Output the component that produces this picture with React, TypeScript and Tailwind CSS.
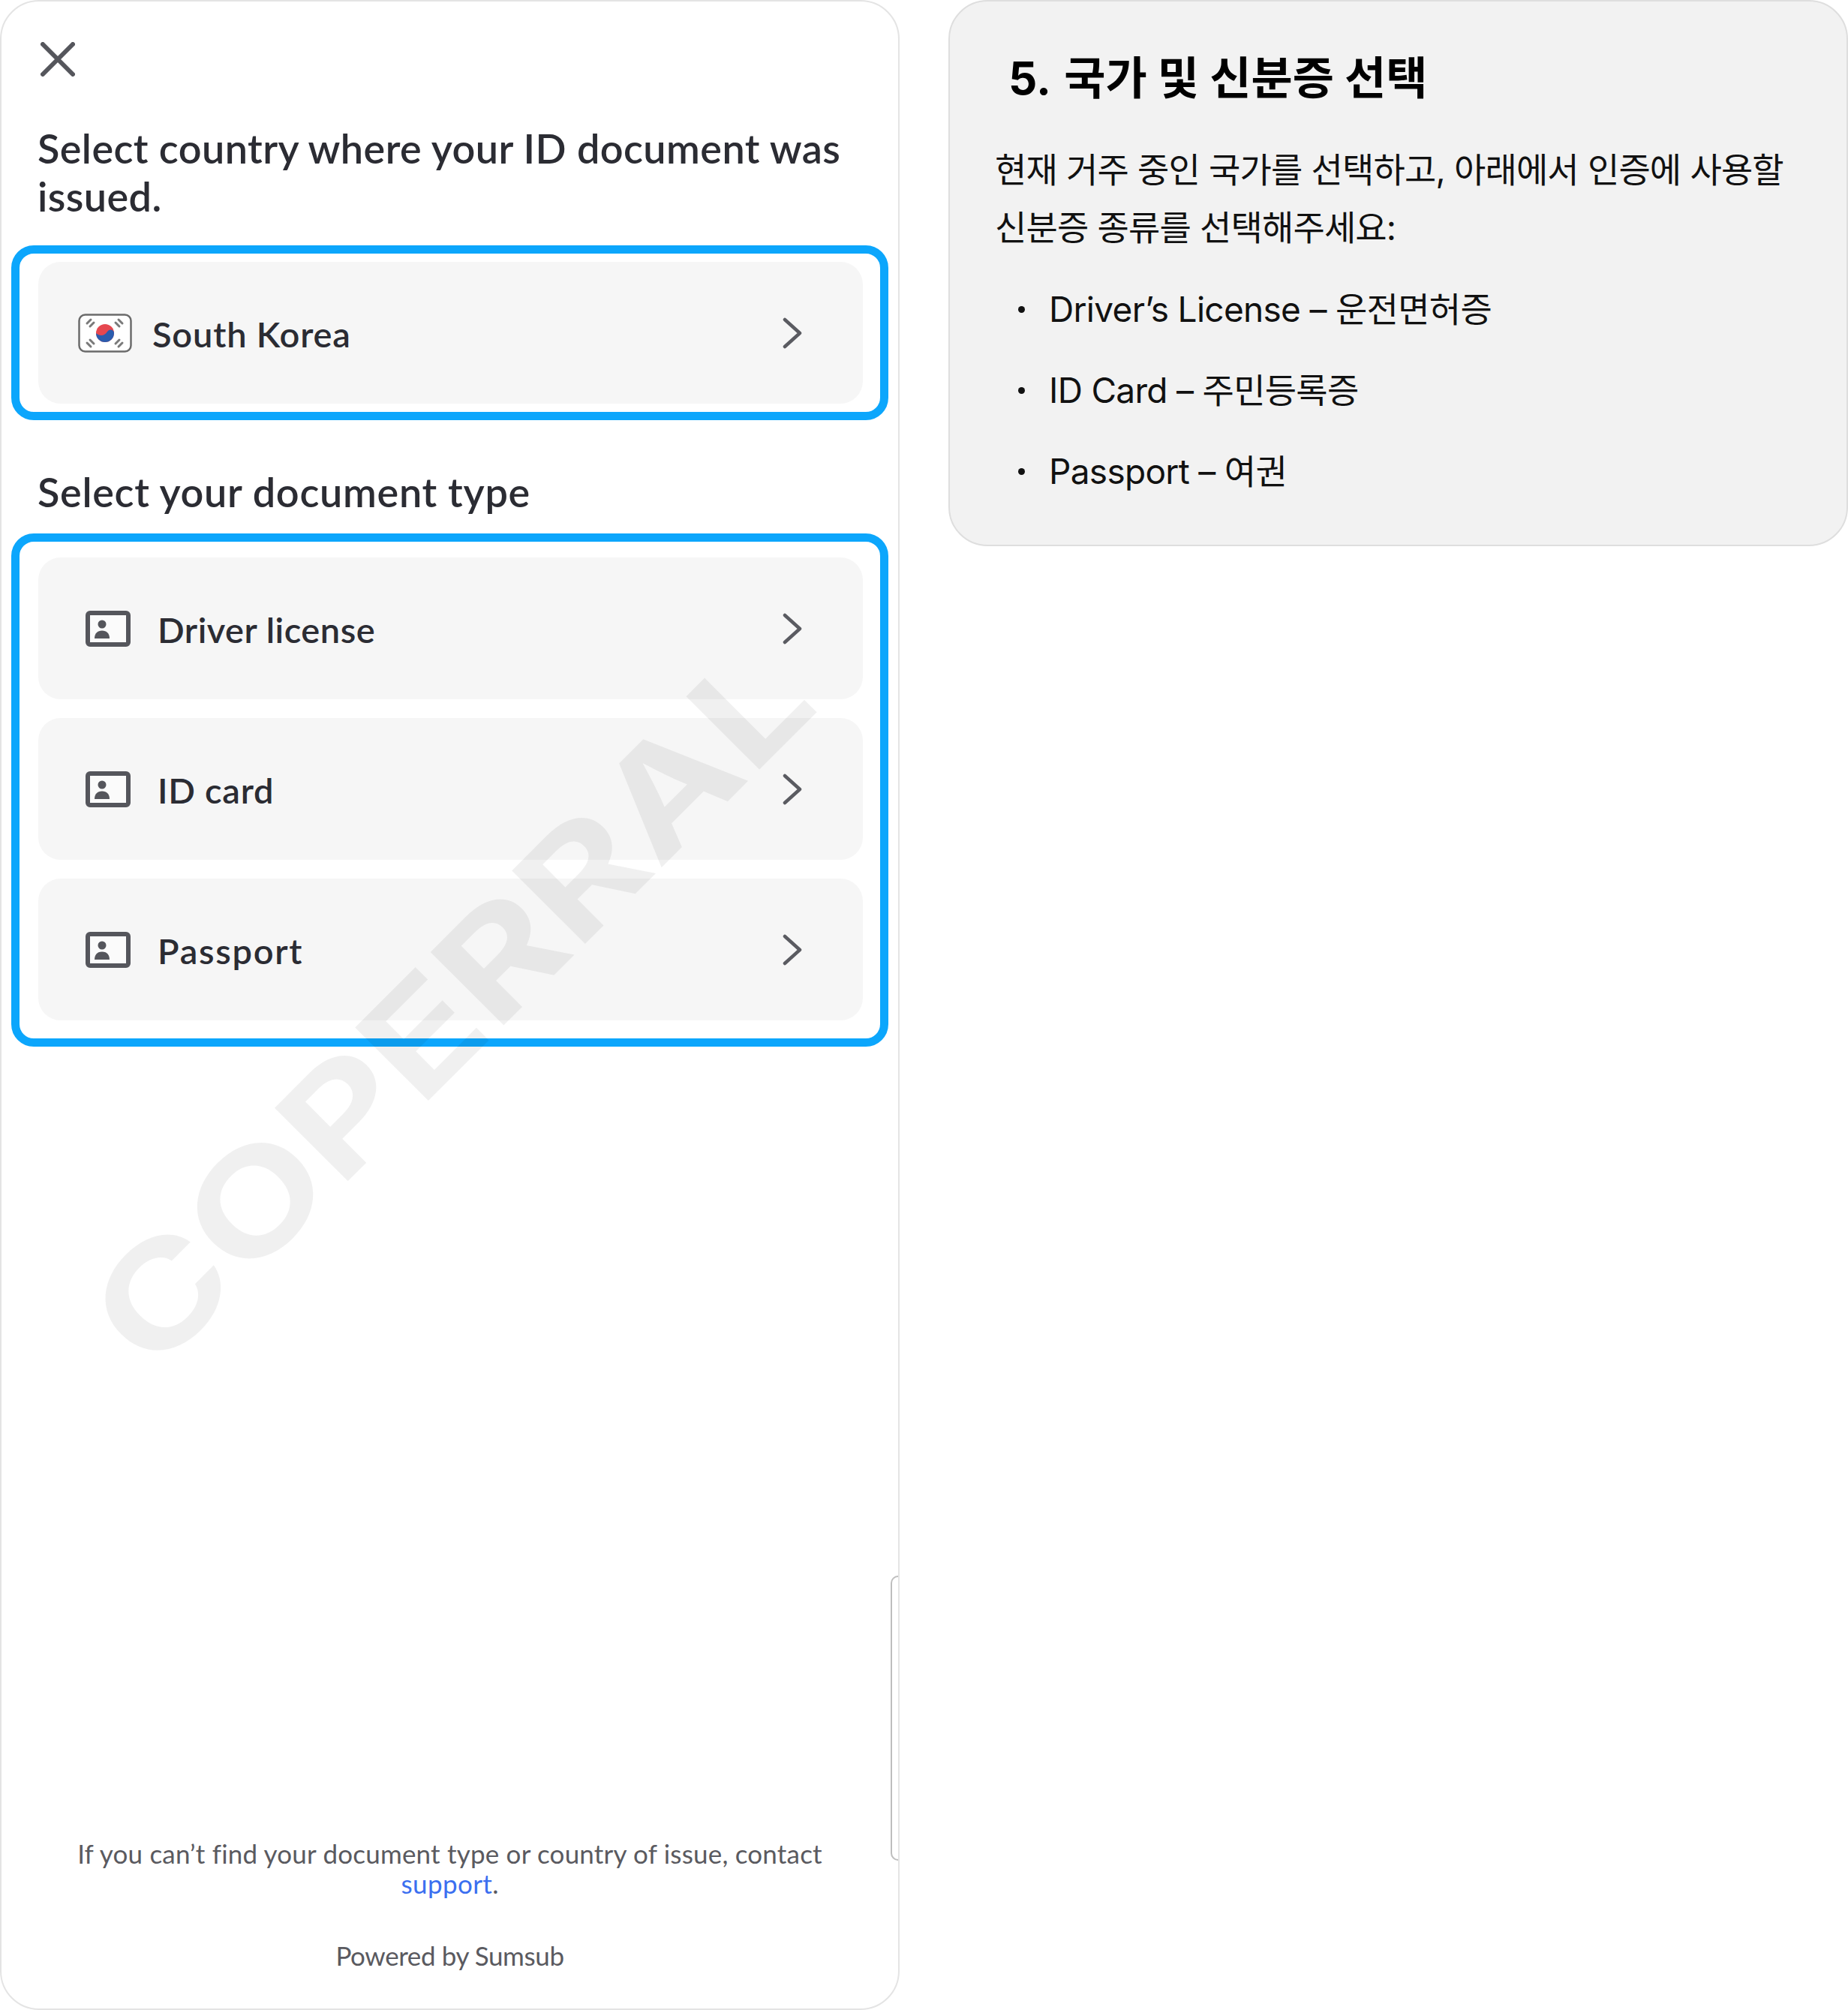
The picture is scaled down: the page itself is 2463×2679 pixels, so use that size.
const Chevron = () => (
  <svg width="26" height="42" viewBox="0 0 26 42" fill="none" className="shrink-0">
    <path d="M3 3 L23 21 L3 39" stroke="#5a5b61" strokeWidth="4.5" strokeLinecap="round" strokeLinejoin="round" />
  </svg>
);

const CardIcon = () => (
  <svg width="60" height="48" viewBox="0 0 60 48" fill="none" className="shrink-0">
    <rect x="3" y="3" width="54" height="42" rx="3" fill="#fbfbfb" stroke="#55565c" strokeWidth="6" />
    <circle cx="22" cy="18" r="5.5" fill="#55565c" />
    <path d="M12 37 C12 30 16 26.5 22 26.5 C28 26.5 32 30 32 37 Z" fill="#55565c" />
  </svg>
);

const KoreaFlag = () => (
  <svg width="72" height="52" viewBox="0 0 72 52" fill="none" className="shrink-0">
    <rect x="1.5" y="1.5" width="69" height="49" rx="8" fill="#fff" stroke="#6b6b6b" strokeWidth="2.5" />
    <circle cx="36" cy="26" r="12" fill="#e6474f" />
    <path d="M24 26 A12 12 0 0 0 48 26 C48 21 42 20 39 24 C36 29 31 30 27 28 C25.5 27.5 24.5 26.5 24 26 Z" fill="#2a5cae" />
    <g stroke="#7a7a7a" strokeWidth="3" strokeLinecap="round">
      <path d="M12 13 L17 8 M16 17 L21 12" />
      <path d="M50 12 L55 17 M54 8 L59 13" />
      <path d="M12 39 L17 44 M16 35 L21 40" />
      <path d="M50 40 L55 35 M54 44 L59 39" />
    </g>
  </svg>
);

const Row = ({ icon, label, gap, tracking }: { icon: React.ReactNode; label: string; gap: string; tracking: string }) => (
  <div className="flex items-center h-[189px] rounded-[30px] bg-[#f6f6f6]">
    <div className={`flex items-center flex-1 ${gap}`}>
      {icon}
      <span className={`text-[47px] leading-[64px] text-[#2b2c33] font-semibold relative top-[1px] ${tracking}`}>{label}</span>
    </div>
    <div className="mr-[81px]">
      <Chevron />
    </div>
  </div>
);

const BULLETS = ["Driver’s License – 운전면허증", "ID Card – 주민등록증", "Passport – 여권"];

export default function App() {
  return (
    <div className="flex items-start w-[2463px] h-[2679px] bg-white font-['Lato','Noto_Sans_CJK_KR',sans-serif]">
      <div className="relative flex flex-col w-[1199px] h-[2679px] border-2 border-[#e4e4e4] rounded-[52px] bg-white overflow-hidden">
        <div className="ml-[52px] mt-[54px] mb-[64px]">
          <svg width="46" height="46" viewBox="0 0 46 46" fill="none">
            <path d="M3 3 L43 43 M43 3 L3 43" stroke="#55565c" strokeWidth="6" strokeLinecap="round" />
          </svg>
        </div>
        <h1 className="mx-[48px] text-[54px] leading-[64px] font-semibold tracking-[0.42px] text-[#2b2c33]">
          Select country where your ID document was issued.
        </h1>

        <div className="ml-[13px] mt-[33px] w-[1169px] border-[11px] border-[#0ca6fc] rounded-[30px] py-[11px] pl-[25px] pr-[23px]">
          <Row icon={<div className="ml-[53px]"><KoreaFlag /></div>} label="South Korea" gap="gap-[27px]" tracking="tracking-[0.8px]" />
        </div>

        <h2 className="mx-[48px] mt-[64px] mb-[1px] text-[54px] leading-[64px] font-semibold tracking-[0.7px] text-[#2b2c33]">Select your document type</h2>

        <div className="flex flex-col gap-[25px] ml-[13px] mt-[22px] w-[1169px] border-[11px] border-[#0ca6fc] rounded-[30px] pt-[21px] pb-[24px] pl-[25px] pr-[23px]">
          <Row icon={<div className="ml-[63px]"><CardIcon /></div>} label="Driver license" gap="gap-[36px]" tracking="tracking-[0.5px]" />
          <Row icon={<div className="ml-[63px]"><CardIcon /></div>} label="ID card" gap="gap-[36px]" tracking="tracking-[0.7px]" />
          <Row icon={<div className="ml-[63px]"><CardIcon /></div>} label="Passport" gap="gap-[36px]" tracking="tracking-[1.7px]" />
        </div>

        <div className="mt-auto mb-[51px] text-center text-[#5a5a60] text-[35px] leading-[40px]">
          <p className="tracking-[0.2px]">If you can’t find your document type or country of issue, contact</p>
          <p>
            <span className="text-[#3b6ff0] tracking-[0.4px]">support</span>.
          </p>
          <p className="mt-[56px] tracking-[-0.4px]">Powered by Sumsub</p>
        </div>

        {/* scroll handle on the right edge */}
        <div className="absolute right-0 top-[2098px] w-[10px] h-[380px] border-2 border-r-0 border-[#bdbdbd] rounded-l-[12px]" />

        {/* watermark */}
        <svg width="1199" height="2679" className="absolute top-[-2px] left-[-2px] pointer-events-none">
          <text
            x="203"
            y="1835"
            transform="rotate(-45 203 1835)"
            fontFamily="Inter"
            fontWeight="700"
            fontSize="190"
            textLength="1261"
            lengthAdjust="spacingAndGlyphs"
            fill="#000"
            fillOpacity="0.06"
          >
            COPERRAL
          </text>
        </svg>
      </div>

      <div className="ml-[65px] w-[1199px] h-[728px] border-2 border-[#dedede] rounded-[52px] bg-[#f2f2f2] font-['Inter','Noto_Sans_CJK_KR',sans-serif] text-[#111]">
        <h1 className="ml-[78px] mt-[62px] text-[60px] leading-[80px] font-bold text-black">
          <span className="mr-[3px]">5.</span> 국가 및 신분증 선택
        </h1>
        <p className="ml-[60px] mr-[40px] mt-[44px] text-[46px] leading-[77px] tracking-[-0.85px]">
          현재 거주 중인 국가를 선택하고, 아래에서 인증에 사용할
          <br />
          신분증 종류를 선택해주세요:
        </p>
        <ul className="flex flex-col gap-[31px] mt-[32px] ml-[91px]">
          {BULLETS.map((item) => (
            <li key={item} className="flex items-center gap-[32px] text-[46px] leading-[77px] tracking-[-0.7px]">
              <span className="w-[9px] h-[9px] rounded-full bg-[#111]" />
              {item}
            </li>
          ))}
        </ul>
      </div>
    </div>
  );
}
